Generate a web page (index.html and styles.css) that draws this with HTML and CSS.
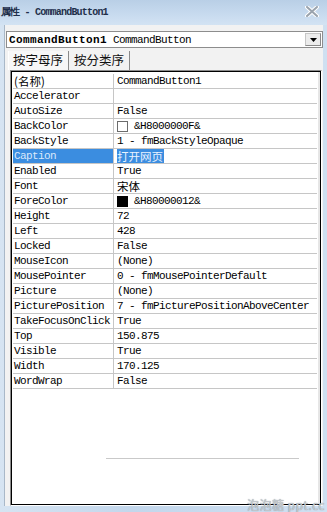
FILE: index.html
```html
<!DOCTYPE html>
<html>
<head lang="zh">
    <meta charset="UTF-8">
    <title>属性</title>
    <link rel="stylesheet" href="styles.css">
</head>
<body>
<div class="window">
    <div class="titlebar">
        <span class="title">属性 - CommandButton1</span>
        <svg class="close" width="14" height="11" viewBox="0 0 14 11">
            <path d="M2 1 L12 10 M12 1 L2 10" stroke="#fff" stroke-width="4" stroke-linecap="round"/>
            <path d="M2 1 L12 10 M12 1 L2 10" stroke="#9aa3ad" stroke-width="2" stroke-linecap="round"/>
        </svg>
    </div>
    <div class="client">
        <div class="combo">
            <span class="combo-text"><b>CommandButton1</b> CommandButton</span>
            <span class="combo-btn">
                <svg width="7" height="4" viewBox="0 0 7 4"><path d="M0 0 H7 L3.5 4 Z" fill="#000"/></svg>
            </span>
        </div>
        <div class="tabs">
            <div class="tab active">按字母序</div>
            <div class="tab">按分类序</div>
        </div>
        <div class="grid">
            <div class="row"><div class="name cjk">(名称)</div><div class="val">CommandButton1</div></div>
            <div class="row"><div class="name">Accelerator</div><div class="val"></div></div>
            <div class="row"><div class="name">AutoSize</div><div class="val">False</div></div>
            <div class="row"><div class="name">BackColor</div><div class="val"><span class="swatch"></span>&amp;H8000000F&amp;</div></div>
            <div class="row"><div class="name">BackStyle</div><div class="val">1 - fmBackStyleOpaque</div></div>
            <div class="row sel"><div class="name">Caption</div><div class="val"><span class="hl cjk">打开网页</span></div></div>
            <div class="row"><div class="name">Enabled</div><div class="val">True</div></div>
            <div class="row"><div class="name">Font</div><div class="val cjk">宋体</div></div>
            <div class="row"><div class="name">ForeColor</div><div class="val"><span class="swatch dark"></span>&amp;H80000012&amp;</div></div>
            <div class="row"><div class="name">Height</div><div class="val">72</div></div>
            <div class="row"><div class="name">Left</div><div class="val">428</div></div>
            <div class="row"><div class="name">Locked</div><div class="val">False</div></div>
            <div class="row"><div class="name">MouseIcon</div><div class="val">(None)</div></div>
            <div class="row"><div class="name">MousePointer</div><div class="val">0 - fmMousePointerDefault</div></div>
            <div class="row"><div class="name">Picture</div><div class="val">(None)</div></div>
            <div class="row"><div class="name">PicturePosition</div><div class="val">7 - fmPicturePositionAboveCenter</div></div>
            <div class="row"><div class="name">TakeFocusOnClick</div><div class="val">True</div></div>
            <div class="row"><div class="name">Top</div><div class="val">150.875</div></div>
            <div class="row"><div class="name">Visible</div><div class="val">True</div></div>
            <div class="row"><div class="name">Width</div><div class="val">170.125</div></div>
            <div class="row"><div class="name">WordWrap</div><div class="val">False</div></div>
            <div class="blank"><span class="smudge"></span></div>
        </div>
    </div>
    <div class="mark cjk">泡泡糖 ppt.cc</div>
</div>
</body>
</html>
```

FILE: styles.css
```css
* {
    padding: 0;
    margin: 0;
    box-sizing: border-box;
}
body {
    width: 327px;
    height: 512px;
    overflow: hidden;
    background: #c9dbee;
    font-family: "Liberation Mono", "DejaVu Sans Mono", monospace;
    font-size: 11px;
    letter-spacing: -0.6px;
    color: #000;
}
.cjk {
    font-family: "Noto Sans CJK SC", sans-serif;
    letter-spacing: 0;
}
.window {
    position: relative;
    width: 327px;
    height: 512px;
    display: flex;
    flex-direction: column;
    background: linear-gradient(to right, #d6e4f2, #c3d7ec 40%, #cfe0f1);
}
.titlebar {
    height: 25px;
    flex: none;
    display: flex;
    align-items: center;
    justify-content: space-between;
    padding: 0 8px 2px 0;
    background: linear-gradient(to bottom, #b9cfe6, #c8dbef 60%, #d3e3f3);
}
.title {
    white-space: nowrap;
    font-weight: bold;
    color: #1e2f4a;
    font-size: 10px;
    letter-spacing: -0.8px;
    padding-left: 1px;
}
.close {
    display: block;
}
.client {
    flex: 1;
    margin: 0 4px 6px 4px;
    background: #f2f2f2;
    border-left: 1px solid #a9b8c8;
    padding: 6px 0 0 1px;
    display: flex;
    flex-direction: column;
}
.combo {
    height: 17px;
    border: 1px solid #8d8d8d;
    background: #fff;
    display: flex;
    align-items: center;
    justify-content: space-between;
    padding: 0 1px 0 2px;
}
.combo-text {
    white-space: nowrap;
    font-size: 11px;
}
.combo-text b {
    letter-spacing: 0.4px;
}
.combo-btn {
    width: 16px;
    height: 13px;
    background: #ececec;
    border: 1px solid #c6c6c6;
    border-right-color: #8a8a8a;
    border-bottom-color: #8a8a8a;
    display: flex;
    align-items: center;
    justify-content: center;
}
.combo-btn svg {
    display: block;
}
.tabs {
    display: flex;
    height: 22px;
    padding: 3px 0 0 2px;
}
.tab {
    padding: 0 5px;
    font-family: "Noto Sans CJK SC", sans-serif;
    font-size: 12.5px;
    letter-spacing: 0;
    line-height: 18px;
    border-right: 1px solid #8a8a8a;
    color: #111;
}
.tab.active {
    background: #f7f7f7;
    border-left: 1px solid #fff;
    padding: 0 5px 0 4px;
}
.grid {
    flex: 1;
    margin: 0 0 0 4px;
    width: 312px;
    border: 1px solid #8a8a8a;
    border-right-color: #fff;
    border-bottom-color: #fff;
    box-shadow: inset 1px 1px 0 #000, inset -1px -1px 0 #000, inset -3px 0 0 #e6e6e6;
    background: #fff;
    padding: 3px 4px 1px 2px;
    display: flex;
    flex-direction: column;
}
.row {
    display: flex;
    height: 15px;
    border-bottom: 1px solid #c6c6c6;
}
.name {
    width: 101px;
    flex: none;
    padding-left: 1px;
    border-right: 1px solid #c6c6c6;
    line-height: 14px;
    white-space: nowrap;
}
.val {
    flex: 1;
    padding-left: 3px;
    line-height: 14px;
    white-space: nowrap;
    display: flex;
    align-items: center;
}
.name.cjk, .val.cjk {
    font-size: 11.5px;
    line-height: 14px;
}
.swatch {
    width: 11px;
    height: 11px;
    margin-right: 6px;
    border: 1px solid #6c6c6c;
    background: #fff;
    flex: none;
}
.swatch.dark {
    background: #000;
    border-color: #000;
}
.row.sel .name {
    background: #3b8de0;
    color: #d9e8fb;
}
.hl {
    background: #3b8de0;
    color: #e9f2ff;
    font-size: 11.5px;
    line-height: 14px;
    padding-right: 1px;
}
.blank {
    flex: 1;
    position: relative;
}
.smudge {
    position: absolute;
    left: 93px;
    top: 69px;
    width: 193px;
    height: 1px;
    background: #c9c9c9;
}
.mark {
    position: absolute;
    right: 2px;
    bottom: 0;
    font-size: 12px;
    line-height: 14px;
    color: #c8cdd2;
    text-shadow: 0 0 1px #6f7780;
    letter-spacing: 0.5px;
}
```
